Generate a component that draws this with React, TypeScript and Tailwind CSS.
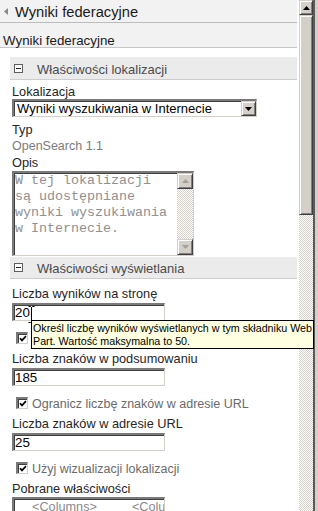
import React from "react";

const Check = () => (
  <div className="w-[12px] h-[12px] shrink-0 border-t-2 border-l-2 border-t-[#7a7a7a] border-l-[#7a7a7a] border-b border-r border-b-[#d4d0c8] border-r-[#d4d0c8] shadow-[inset_1px_1px_0_#404040] bg-white flex items-center justify-center">
    <svg width="8" height="8" viewBox="0 0 8 8">
      <path d="M1 3.2 L3 5.4 L7 1.2" fill="none" stroke="#000" strokeWidth="1.7" />
    </svg>
  </div>
);

const CheckRow = ({ label }: { label?: string }) => (
  <div className="shrink-0 mt-[7px] h-[20px] flex items-center pl-[4px]">
    <Check />
    {label ? (
      <span className="ml-[4px] pt-[1px] text-[12.5px] leading-[16px] text-[#6a6a6a] whitespace-nowrap">{label}</span>
    ) : null}
  </div>
);

const Label = ({ children, className }: { children: React.ReactNode; className?: string }) => (
  <div className={"shrink-0 h-[16px] pt-[1px] leading-[16px] text-[12.75px] text-[#262626] whitespace-nowrap " + (className || "")}>{children}</div>
);

const Input = ({ value, children }: { value: string; children?: React.ReactNode }) => (
  <div className="shrink-0 relative mt-[2px] w-[153px] h-[18px] border-t-2 border-l-2 border-t-[#7a7a7a] border-l-[#7a7a7a] border-b border-r border-b-[#d4d0c8] border-r-[#d4d0c8] shadow-[inset_1px_1px_0_#404040] bg-white pl-[1px] text-[13.33px] leading-[15px] text-black">
    {value}
    {children}
  </div>
);

const Arrow = ({ dir, color }: { dir: "up" | "down"; color: string }) => (
  <svg width="7" height="4" viewBox="0 0 7 4">
    {dir === "up" ? <path d="M3.5 0 L7 4 L0 4 Z" fill={color} /> : <path d="M0 0 L7 0 L3.5 4 Z" fill={color} />}
  </svg>
);

const Btn = ({ dir, color, className }: { dir: "up" | "down"; color: string; className: string }) => (
  <div className={"bg-[#d4d0c8] border border-t-[#d4d0c8] border-l-[#d4d0c8] border-b-[#404040] border-r-[#404040] shadow-[inset_1px_1px_0_#ffffff,inset_-1px_-1px_0_#808080] flex items-center justify-center shrink-0 " + className}>
    <Arrow dir={dir} color={color} />
  </div>
);

const SectionHeader = ({ title, className }: { title: string; className?: string }) => (
  <div className={"shrink-0 ml-[10px] bg-[#ebebeb] border-b border-b-[#cdcdcd] flex items-center " + (className || "")}>
    <div className="ml-[4px] w-[9px] h-[9px] border border-[#5e5e5e] bg-white flex items-center justify-center">
      <div className="w-[5px] h-[1px] bg-[#222]" />
    </div>
    <span className="ml-[14px] text-[13px] text-[#4a4a4a] leading-[16px] pt-[3px] whitespace-nowrap">{title}</span>
  </div>
);

export default function App() {
  return (
    <div className="relative w-[318px] h-[511px] overflow-hidden bg-white flex font-['Liberation_Sans',Arial,sans-serif]">
      <div className="w-[297px] shrink-0 flex flex-col">
        <div className="shrink-0 h-[23px] bg-[#f2f2f2] border-b border-b-[#bcbcbc] flex items-center pt-[1px]">
          <svg className="ml-[4px]" width="4" height="7" viewBox="0 0 4 7">
            <path d="M4 0 L0 3.5 L4 7 Z" fill="#8a8a8a" />
          </svg>
          <span className="ml-[7px] text-[14.7px] text-[#1a1a1a] leading-[20px] whitespace-nowrap">Wyniki federacyjne</span>
        </div>
        <div className="shrink-0 h-[25px] bg-[#f2f2f2] border-b border-b-[#c6c6c6]">
          <div className="pl-[3px] pt-[10px] text-[13.33px] leading-[16px] text-[#1a1a1a] whitespace-nowrap">Wyniki federacyjne</div>
        </div>

        <SectionHeader title="Właściwości lokalizacji" className="mt-[9px] h-[23px]" />
        <div className="shrink-0 px-[12px] flex flex-col">
          <Label className="mt-[3px]">Lokalizacja</Label>
          <div className="shrink-0 w-[245px] h-[18px] border-t-2 border-l-2 border-t-[#7a7a7a] border-l-[#7a7a7a] border-b border-r border-b-[#d4d0c8] border-r-[#d4d0c8] shadow-[inset_1px_1px_0_#404040] bg-white flex items-center">
            <span className="flex-1 pl-[3px] text-[13px] leading-[15px] text-black whitespace-nowrap">Wyniki wyszukiwania w Internecie</span>
            <Btn dir="down" color="#000" className="w-[15px] h-[15px]" />
          </div>
          <Label className="mt-[4px]">Typ</Label>
          <div className="shrink-0 h-[16px] pt-[1px] leading-[16px] text-[12.5px] text-[#7c7c7c] whitespace-nowrap">OpenSearch 1.1</div>
          <Label className="mt-[1px]">Opis</Label>
          <div className="shrink-0 mt-[1px] w-[182px] h-[85px] border-t-2 border-l-2 border-t-[#7a7a7a] border-l-[#7a7a7a] border-b border-r border-b-[#d4d0c8] border-r-[#d4d0c8] shadow-[inset_1px_1px_0_#404040] bg-white flex">
            <div className="flex-1 pl-[1px] font-['Liberation_Mono','Courier_New',monospace] text-[13.33px] leading-[16px] text-[#909090] whitespace-pre">
              {"W tej lokalizacji\nsą udostępniane\nwyniki wyszukiwania\nw Internecie."}
            </div>
            <div className="w-[16px] flex flex-col">
              <Btn dir="up" color="#a0a0a0" className="h-[16px]" />
              <div className="flex-1 bg-[conic-gradient(#ffffff_25%,#d4d0c8_0_50%,#ffffff_0_75%,#d4d0c8_0)] bg-[length:2px_2px]" />
              <Btn dir="down" color="#a0a0a0" className="h-[16px]" />
            </div>
          </div>
        </div>

        <SectionHeader title="Właściwości wyświetlania" className="mt-[1px] h-[22px]" />
        <div className="shrink-0 px-[12px] flex flex-col">
          <Label className="mt-[6px]">Liczba wyników na stronę</Label>
          <Input value="20">
            <svg className="absolute left-[14px] top-[1px]" width="7" height="17" viewBox="0 0 7 17">
              <path d="M0.5 0.5 H2.5 L3.5 1.5 L4.5 0.5 H6.5 M3.5 1.5 V15.5 M0.5 16.5 H2.5 L3.5 15.5 L4.5 16.5 H6.5" fill="none" stroke="#000" strokeWidth="1" />
            </svg>
          </Input>
          <CheckRow />
          <Label className="mt-[2px]">Liczba znaków w podsumowaniu</Label>
          <Input value="185" />
          <CheckRow label="Ogranicz liczbę znaków w adresie URL" />
          <Label className="mt-[2px]">Liczba znaków w adresie URL</Label>
          <Input value="25" />
          <CheckRow label="Użyj wizualizacji lokalizacji" />
          <Label className="mt-[2px]">Pobrane właściwości</Label>
          <div className="shrink-0 mt-[1px] w-[153px] h-[60px] border-t-2 border-l-2 border-t-[#7a7a7a] border-l-[#7a7a7a] border-r border-r-[#d4d0c8] shadow-[inset_1px_1px_0_#404040] bg-white overflow-hidden flex text-[12.7px] leading-[16px] text-[#8a8a8a] whitespace-nowrap">
            <span className="ml-[18px] shrink-0">&lt;Columns&gt;</span>
            <span className="ml-[35px] shrink-0">&lt;Columns&gt;</span>
          </div>
        </div>
      </div>

      <div className="flex h-full">
        <div className="w-[2px] bg-white" />
        <div className="w-[14px] flex flex-col">
          <Btn dir="up" color="#000" className="h-[15px]" />
          <div className="h-[200px] shrink-0 bg-[#d4d0c8] border border-t-[#d4d0c8] border-l-[#d4d0c8] border-b-[#404040] border-r-[#404040] shadow-[inset_1px_1px_0_#ffffff,inset_-1px_-1px_0_#808080]" />
          <div className="flex-1 bg-[conic-gradient(#ffffff_25%,#d4d0c8_0_50%,#ffffff_0_75%,#d4d0c8_0)] bg-[length:2px_2px]" />
        </div>
        <div className="w-[2px] bg-[#5a5a5a]" />
        <div className="w-[3px] bg-[#d4d0c8]" />
      </div>

      <div className="absolute left-[31px] top-[320px] w-[283px] h-[29px] border border-black bg-[#ffffe1] pl-[1px] pt-[1px] text-[10.7px] leading-[13px] text-black whitespace-nowrap">
        <div>Określ liczbę wyników wyświetlanych w tym składniku Web</div>
        <div>Part. Wartość maksymalna to 50.</div>
      </div>
    </div>
  );
}
